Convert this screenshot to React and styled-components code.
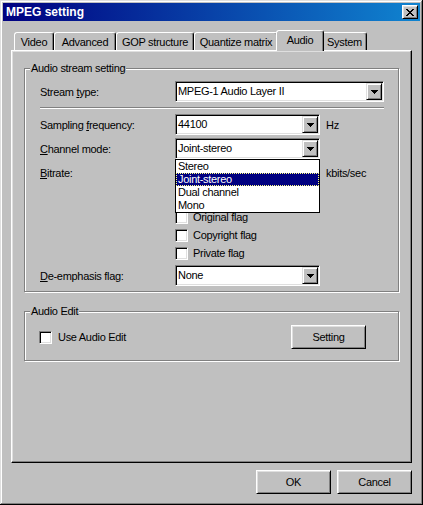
import styled, { createGlobalStyle, css } from "styled-components";

const GlobalStyle = createGlobalStyle`
  html, body {
    margin: 0;
    padding: 0;
    background: #c0c0c0;
  }
  body {
    font-family: "Liberation Sans", Arial, sans-serif;
    font-size: 11px;
    letter-spacing: -0.3px;
    color: #000;
  }
`;

const Window = styled.div`
  width: 423px;
  height: 505px;
  box-sizing: border-box;
  padding: 3px;
  background: #c0c0c0;
  box-shadow: inset -1px -1px 0 #000, inset 1px 1px 0 #dfdfdf,
    inset -2px -2px 0 #808080, inset 2px 2px 0 #fff;
  display: flex;
  flex-direction: column;
`;

const TitleBar = styled.div`
  height: 18px;
  display: flex;
  align-items: center;
  padding-left: 3px;
  background: linear-gradient(90deg, #000080, #1084d0);
`;

const TitleText = styled.span`
  flex: 1;
  color: #fff;
  font-weight: bold;
  font-size: 12px;
  letter-spacing: 0;
`;

const CloseBtn = styled.span`
  width: 16px;
  height: 14px;
  margin-right: 2px;
  box-sizing: border-box;
  background: #c0c0c0;
  border: 1px solid;
  border-color: #fff #000 #000 #fff;
  box-shadow: inset 1px 1px 0 #dfdfdf, inset -1px -1px 0 #808080;
  display: flex;
  align-items: center;
  justify-content: center;
`;

const Body = styled.div`
  padding: 0 8px;
`;

const TabRow = styled.div`
  display: flex;
  align-items: flex-end;
  height: 20px;
  margin-top: 9px;
  padding-left: 3px;
`;

const Tab = styled.div`
  position: relative;
  z-index: ${(p) => (p.$active ? 2 : 1)};
  box-sizing: border-box;
  width: ${(p) => p.$w}px;
  height: ${(p) => (p.$active ? 21 : 18)}px;
  margin: 0 ${(p) => (p.$active ? -2 : 0)}px ${(p) => (p.$active ? -1 : 0)}px;
  padding-top: 2px;
  line-height: 14px;
  text-align: center;
  background: #c0c0c0;
  border: 1px solid;
  border-bottom: none;
  border-color: #fff #000 transparent #fff;
  border-radius: 3px 3px 0 0;
  box-shadow: inset -1px 0 0 #808080;
`;

const Panel = styled.div`
  box-sizing: border-box;
  height: 413px;
  padding: 0 12px;
  border: 1px solid;
  border-color: #fff #000 #000 #fff;
  box-shadow: inset -1px -1px 0 #808080, inset 1px 1px 0 #dfdfdf;
`;

const Group = styled.section`
  position: relative;
  margin-top: ${(p) => p.$top}px;
  border: 1px solid #808080;
  box-shadow: 1px 1px 0 #fff, inset 1px 1px 0 #fff;
  padding: ${(p) => p.$pad};
`;

const Caption = styled.span`
  position: absolute;
  top: -7px;
  left: 5px;
  padding: 0 1px;
  line-height: 13px;
  background: #c0c0c0;
`;

const Row = styled.div`
  display: flex;
  align-items: center;
  height: ${(p) => p.$h || 21}px;
  margin-top: ${(p) => p.$top || 0}px;
`;

const CheckStack = styled.div`
  display: flex;
  flex-direction: column;
  margin-top: ${(p) => p.$top}px;
  padding-left: 135px;
`;

const Label = styled.span`
  width: 135px;
  flex-shrink: 0;
`;

const Key = styled.u`
  text-decoration: underline;
`;

const Unit = styled.span`
  margin-left: 6px;
`;

const Separator = styled.div`
  box-sizing: border-box;
  width: 344px;
  height: 2px;
  margin-top: 5px;
  border-top: 1px solid #808080;
  border-bottom: 1px solid #fff;
`;

const Combo = styled.div`
  position: relative;
  box-sizing: border-box;
  width: ${(p) => p.$w}px;
  height: 21px;
  padding: 0 1px;
  display: flex;
  align-items: center;
  background: #fff;
  border: 1px solid;
  border-color: #808080 #fff #fff #808080;
  box-shadow: inset 1px 1px 0 #000, inset -1px -1px 0 #dfdfdf;
`;

const ComboText = styled.span`
  flex: 1;
  padding-left: 1px;
  line-height: 15px;
  white-space: nowrap;
`;

const DropBtn = styled.span`
  width: 16px;
  height: 17px;
  box-sizing: border-box;
  background: #c0c0c0;
  border: 1px solid;
  border-color: #dfdfdf #000 #000 #dfdfdf;
  box-shadow: inset 1px 1px 0 #fff, inset -1px -1px 0 #808080;
  display: flex;
  align-items: center;
  justify-content: center;
`;

const DropList = styled.div`
  position: absolute;
  z-index: 5;
  top: calc(100% + 1px);
  left: -1px;
  width: ${(p) => p.$w}px;
  box-sizing: border-box;
  background: #fff;
  border: 1px solid #000;
`;

const ListItem = styled.div`
  height: 13px;
  line-height: 13px;
  padding-left: 2px;
  box-sizing: border-box;
  ${(p) =>
    p.$sel &&
    css`
      background: #000080;
      color: #fff;
      outline: 1px dotted #ffff80;
      outline-offset: -1px;
    `}
`;

const CheckRow = styled.label`
  display: flex;
  align-items: center;
  gap: ${(p) => p.$gap || 5}px;
  height: 18px;
`;

const CheckBox = styled.span`
  width: 13px;
  height: 13px;
  flex-shrink: 0;
  box-sizing: border-box;
  background: #fff;
  border: 1px solid;
  border-color: #808080 #fff #fff #808080;
  box-shadow: inset 1px 1px 0 #000, inset -1px -1px 0 #dfdfdf;
`;

const Button = styled.button`
  width: 75px;
  height: 24px;
  padding: 0;
  margin-left: ${(p) => (p.$push ? "auto" : "0")};
  font: inherit;
  letter-spacing: inherit;
  color: #000;
  background: #c0c0c0;
  border: 1px solid;
  border-color: #fff #000 #000 #fff;
  box-shadow: inset 1px 1px 0 #dfdfdf, inset -1px -1px 0 #808080;
`;

const Footer = styled.div`
  display: flex;
  justify-content: flex-end;
  gap: 6px;
  margin-top: 7px;
`;

const Arrow = () => (
  <svg width="7" height="4" viewBox="0 0 7 4" shapeRendering="crispEdges">
    <path d="M0 0h7v1H0z M1 1h5v1H1z M2 2h3v1H2z M3 3h1v1H3z" fill="#000" />
  </svg>
);

const CloseGlyph = () => (
  <svg width="8" height="7" viewBox="0 0 8 7" shapeRendering="crispEdges">
    <path
      d="M0 0h2v1H0z M6 0h2v1H6z M1 1h2v1H1z M5 1h2v1H5z M2 2h4v1H2z M3 3h2v1H3z M2 4h4v1H2z M1 5h2v1H1z M5 5h2v1H5z M0 6h2v1H0z M6 6h2v1H6z"
      fill="#000"
    />
  </svg>
);

const tabs = [
  { name: "Video", w: 40 },
  { name: "Advanced", w: 62 },
  { name: "GOP structure", w: 78 },
  { name: "Quantize matrix", w: 84 },
  { name: "Audio", w: 48, active: true },
  { name: "System", w: 45 },
];

const channelModes = ["Stereo", "Joint-stereo", "Dual channel", "Mono"];

const Select = ({ w, value, children }) => (
  <Combo $w={w}>
    <ComboText>{value}</ComboText>
    <DropBtn>
      <Arrow />
    </DropBtn>
    {children}
  </Combo>
);

const Check = ({ label, gap }) => (
  <CheckRow $gap={gap}>
    <CheckBox />
    <span>{label}</span>
  </CheckRow>
);

const App = () => {
  return (
    <>
      <GlobalStyle />
      <Window>
        <TitleBar>
          <TitleText>MPEG setting</TitleText>
          <CloseBtn>
            <CloseGlyph />
          </CloseBtn>
        </TitleBar>
        <Body>
          <TabRow>
            {tabs.map((t) => (
              <Tab key={t.name} $w={t.w} $active={t.active}>
                {t.name}
              </Tab>
            ))}
          </TabRow>
          <Panel>
            <Group $top={17} $pad="12px 0 5px 15px">
              <Caption>Audio stream setting</Caption>
              <Row>
                <Label>
                  Stream <Key>t</Key>ype:
                </Label>
                <Select w={209} value="MPEG-1 Audio Layer II" />
              </Row>
              <Separator />
              <Row $top={5}>
                <Label>
                  Sampling <Key>f</Key>requency:
                </Label>
                <Select w={145} value="44100" />
                <Unit>Hz</Unit>
              </Row>
              <Row $top={3}>
                <Label>
                  <Key>C</Key>hannel mode:
                </Label>
                <Select w={145} value="Joint-stereo">
                  <DropList $w={145}>
                    {channelModes.map((m) => (
                      <ListItem key={m} $sel={m === "Joint-stereo"}>
                        {m}
                      </ListItem>
                    ))}
                  </DropList>
                </Select>
              </Row>
              <Row $top={3}>
                <Label>
                  <Key>B</Key>itrate:
                </Label>
                <Select w={145} value="" />
                <Unit>kbits/sec</Unit>
              </Row>
              <CheckStack $top={25}>
                <Check label="Original flag" />
                <Check label="Copyright flag" />
                <Check label="Private flag" />
              </CheckStack>
              <Row $top={3}>
                <Label>
                  <Key>D</Key>e-emphasis flag:
                </Label>
                <Select w={145} value="None" />
              </Row>
            </Group>
            <Group $top={19} $pad="13px 32px 11px 14px">
              <Caption>Audio Edit</Caption>
              <Row $h={24}>
                <Check gap={6} label="Use Audio Edit" />
                <Button $push>Setting</Button>
              </Row>
            </Group>
          </Panel>
          <Footer>
            <Button>OK</Button>
            <Button>Cancel</Button>
          </Footer>
        </Body>
      </Window>
    </>
  );
};

export default App;
